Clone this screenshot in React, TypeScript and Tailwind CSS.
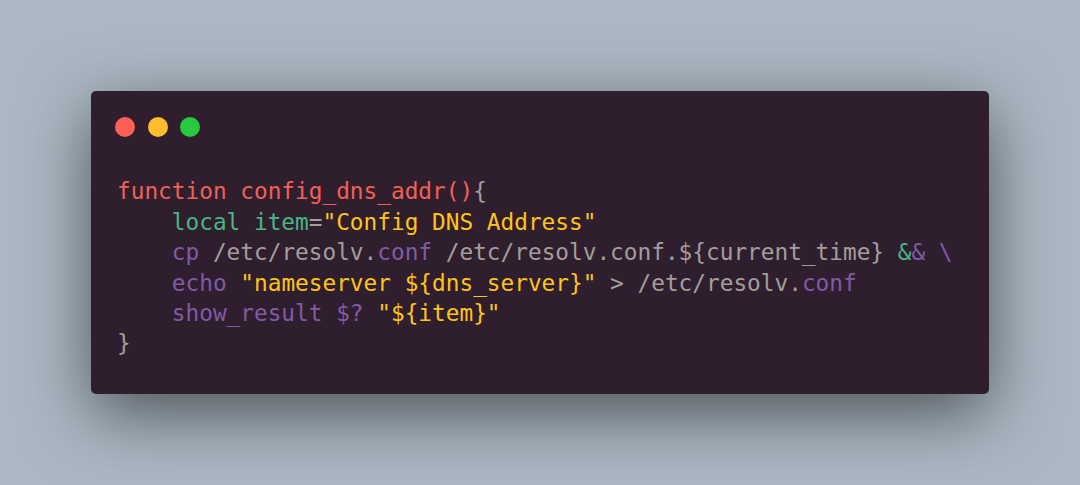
import React from "react";

const R = "text-[#ef6155]";
const G = "text-[#48b685]";
const Y = "text-[#fec418]";
const P = "text-[#815ba4]";
const F = "text-[#a39e9b]";

export default function App() {
  return (
    <div className="w-full h-[485px] bg-[#abb8c3] flex items-center justify-center">
      <div className="w-[898px] rounded-[5px] bg-[#2f1e2e] shadow-[0_20px_68px_rgba(0,0,0,0.55)] pt-[26px] pb-[35px]">
        <div className="flex gap-[12.5px] pl-[24px]">
          <div className="w-[20px] h-[20px] rounded-full bg-[#ff5f56]" />
          <div className="w-[20px] h-[20px] rounded-full bg-[#ffbd2e]" />
          <div className="w-[20px] h-[20px] rounded-full bg-[#27c93f]" />
        </div>
        <pre className="mt-[39px] pl-[26px] text-[22.75px] leading-[30.4px] whitespace-pre font-['DejaVu_Sans_Mono',monospace]">
          <div>
            <span className={R}>function config_dns_addr()</span>
            <span className={F}>{"{"}</span>
          </div>
          <div>
            {"    "}
            <span className={G}>local item</span>
            <span className={F}>=</span>
            <span className={Y}>"Config DNS Address"</span>
          </div>
          <div>
            {"    "}
            <span className={P}>cp</span>
            <span className={F}> /etc/resolv.</span>
            <span className={P}>conf</span>
            <span className={F}>{" /etc/resolv.conf.${current_time} "}</span>
            <span className={G}>&amp;</span>
            <span className={P}>&amp; \</span>
          </div>
          <div>
            {"    "}
            <span className={P}>echo</span>{" "}
            <span className={Y}>{'"nameserver ${dns_server}"'}</span>
            <span className={F}> &gt; /etc/resolv.</span>
            <span className={P}>conf</span>
          </div>
          <div>
            {"    "}
            <span className={P}>show_result $?</span>{" "}
            <span className={Y}>{'"${item}"'}</span>
          </div>
          <div>
            <span className={F}>{"}"}</span>
          </div>
        </pre>
      </div>
    </div>
  );
}
